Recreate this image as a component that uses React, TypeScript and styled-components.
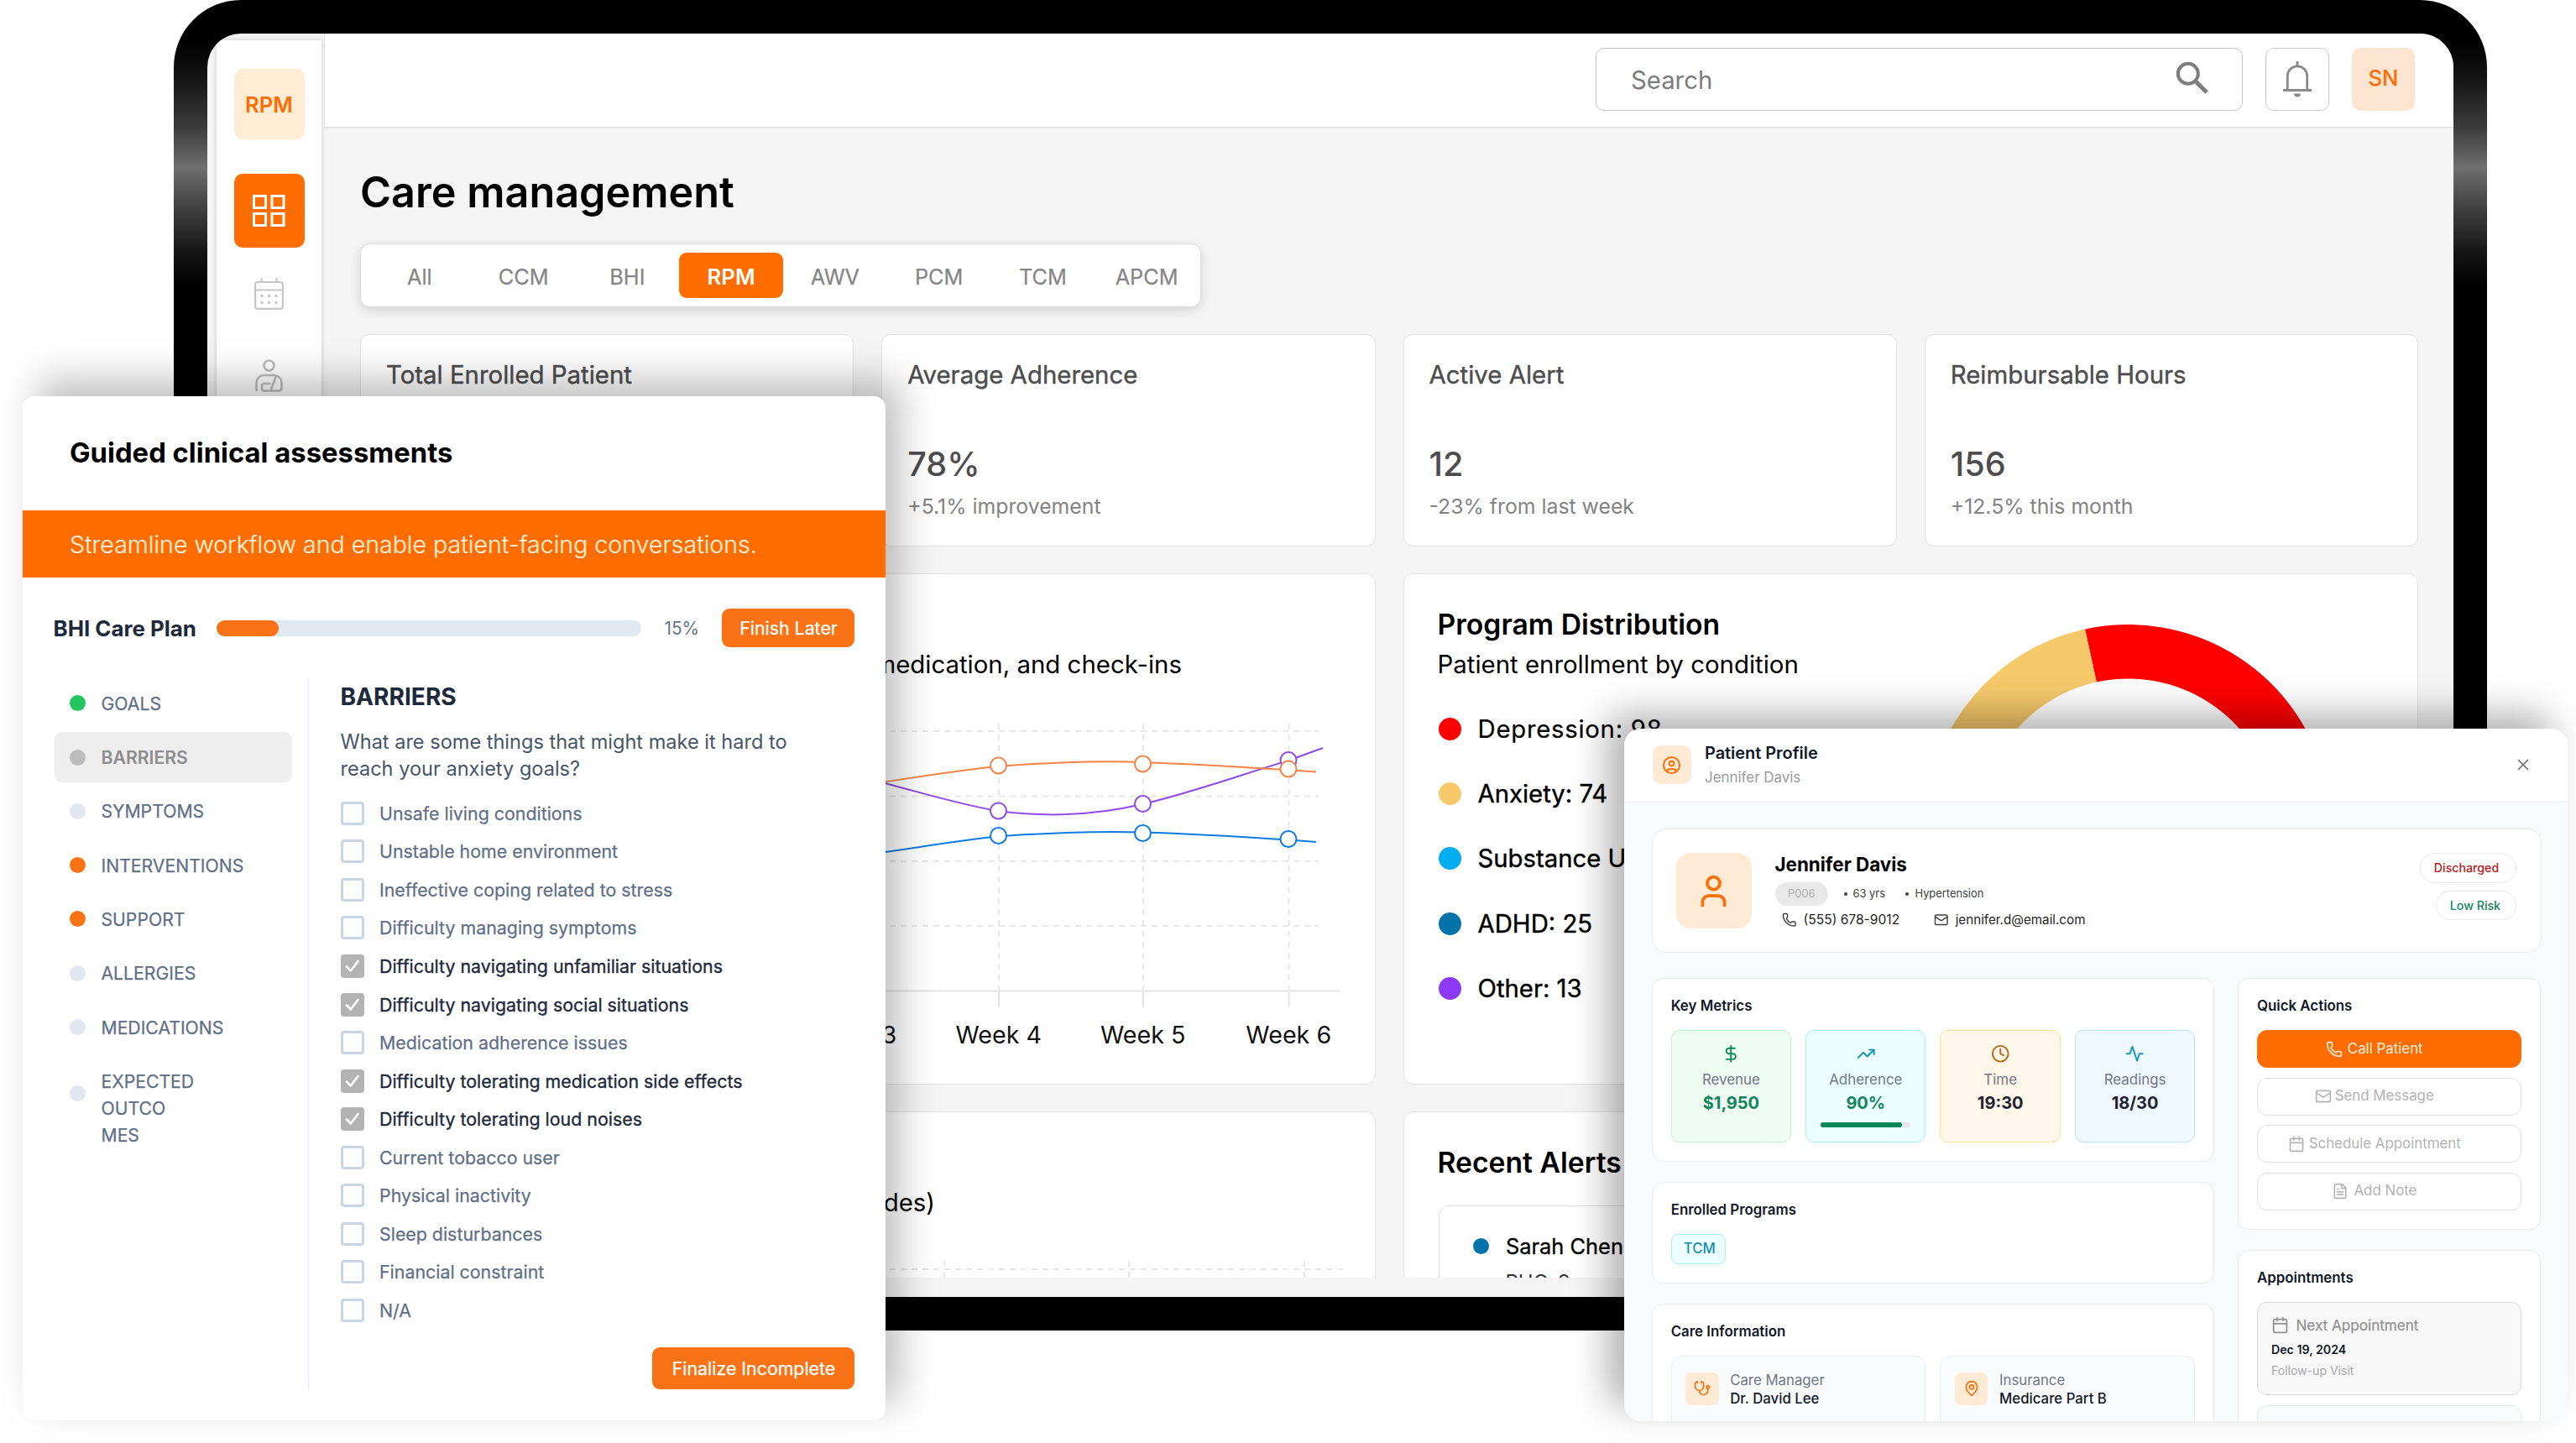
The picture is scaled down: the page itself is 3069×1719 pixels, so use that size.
import * as React from 'react';
import styled, { createGlobalStyle } from 'styled-components';
import {
  Calendar,
  CircleUser,
  Clock,
  DollarSign,
  FileText,
  Mail,
  MapPin,
  Phone,
  Stethoscope,
  TrendingUp,
  User,
  X,
} from 'lucide-react';

const GlobalStyle = createGlobalStyle`
  *, *::before, *::after {
    box-sizing: border-box;
  }

  body {
    margin: 0;
    background: #fff;
    font-family: 'Inter', 'Liberation Sans', sans-serif;
  }

  h1, h2, h3, p, ul {
    margin: 0;
    padding: 0;
    font-weight: 400;
    list-style: none;
  }

  svg {
    display: block;
    flex: none;
  }
`;

/* ---------- data ---------- */

const tabs = ['All', 'CCM', 'BHI', 'RPM', 'AWV', 'PCM', 'TCM', 'APCM'];

const stats = [
  { title: 'Total Enrolled Patient', value: '1,284', note: '+8.2% this month' },
  { title: 'Average Adherence', value: '78%', note: '+5.1% improvement' },
  { title: 'Active Alert', value: '12', note: '-23% from last week' },
  { title: 'Reimbursable Hours', value: '156', note: '+12.5% this month' },
];

const conditions = [
  { label: 'Depression: 98', color: '#ff0000', wide: true },
  { label: 'Anxiety: 74', color: '#f6c96b' },
  { label: 'Substance Use: 42', color: '#00aeef' },
  { label: 'ADHD: 25', color: '#0273a8' },
  { label: 'Other: 13', color: '#8c39f5' },
];

const weeks = [
  { label: 'Week 1', x: 201 },
  { label: 'Week 2', x: 374 },
  { label: 'Week 3', x: 546 },
  { label: 'Week 4', x: 718.5 },
  { label: 'Week 5', x: 890.5 },
  { label: 'Week 6', x: 1064 },
];

const series = [
  {
    color: '#0f7be0',
    d: 'M201 190C330 188 450 184 583 165C640 157 690 148 730 145.5C800 141 850 140.5 890 141.5C960 143.5 1030 148 1097 153',
    points: [
      [718.5, 145.5],
      [890.5, 142.5],
      [1064, 149.5],
    ],
  },
  {
    color: '#8f4be8',
    d: 'M201 40C330 40 450 55 583 83C640 98 680 110 718 116C770 123 830 122 890 108C950 94 1010 72 1064 56L1105 41',
    points: [
      [718.5, 116],
      [890.5, 107.5],
      [1064, 55.5],
    ],
  },
  {
    color: '#f58345',
    d: 'M201 140C330 125 450 100 583 81.5C640 73 690 64.5 730 62C800 57 850 56.5 890 58C960 60.500 1030 65 1097 69.500',
    points: [
      [718.5, 62],
      [890.5, 60],
      [1064, 66],
    ],
  },
];

const sections = [
  { label: 'GOALS', color: '#22c55e' },
  { label: 'BARRIERS', color: '#bcbcbc', active: true },
  { label: 'SYMPTOMS', color: '#e2e8f0' },
  { label: 'INTERVENTIONS', color: '#f97316' },
  { label: 'SUPPORT', color: '#f97316' },
  { label: 'ALLERGIES', color: '#e2e6f0' },
  { label: 'MEDICATIONS', color: '#e2e6f0' },
];

const barriers = [
  { label: 'Unsafe living conditions' },
  { label: 'Unstable home environment' },
  { label: 'Ineffective coping related to stress' },
  { label: 'Difficulty managing symptoms' },
  { label: 'Difficulty navigating unfamiliar situations', checked: true },
  { label: 'Difficulty navigating social situations', checked: true },
  { label: 'Medication adherence issues' },
  { label: 'Difficulty tolerating medication side effects', checked: true },
  { label: 'Difficulty tolerating loud noises', checked: true },
  { label: 'Current tobacco user' },
  { label: 'Physical inactivity' },
  { label: 'Sleep disturbances' },
  { label: 'Financial constraint' },
  { label: 'N/A' },
];

/* ---------- icons ---------- */

const GridIcon = () => (
  <svg width="39" height="39" viewBox="0 0 39 39" fill="none" stroke="#fff" strokeWidth="3">
    <rect x="1.500" y="1.500" width="14" height="14" />
    <rect x="23" y="1.500" width="14" height="14" />
    <rect x="1.500" y="22.500" width="14" height="14" />
    <rect x="23" y="22.500" width="14" height="14" />
  </svg>
);

const ScheduleIcon = () => (
  <svg width="35" height="38" viewBox="0 0 35 38" fill="none" stroke="#c6c6c6" strokeWidth="2.200">
    <rect x="1.100" y="5" width="32.800" height="31.900" rx="3" />
    <path d="M1 14.500h33M8.500 0v5M26.500 0v5" />
    <g fill="#c6c6c6" stroke="none">
      {[21.5, 29.5].map(y => [9, 17.5, 26].map(x => <circle key={`${x}-${y}`} cx={x} cy={y} r="1.800" />))}
    </g>
  </svg>
);

const PatientIcon = () => (
  <svg width="33" height="39" viewBox="0 0 33 39" fill="none" stroke="#bdbdbd" strokeWidth="2.600">
    <circle cx="16.500" cy="7.500" r="6" />
    <path d="M1.500 38V28a9 9 0 0 1 9-9h12a9 9 0 0 1 9 9v6.500a3 3 0 0 1-3 3h-18a2.500 2.500 0 0 1-2.500-2.500v-3.500a2.500 2.500 0 0 1 2.500-2.500h8" />
    <path d="M25 20L18.500 37" />
  </svg>
);

const SearchIcon = () => (
  <svg width="40" height="40" viewBox="0 0 40 40" fill="none" stroke="#7d7d7d">
    <circle cx="14.800" cy="14.800" r="12" strokeWidth="4" />
    <path d="M23.500 23.500L37 37" strokeWidth="5" />
  </svg>
);

const BellIcon = () => (
  <svg width="34" height="43" viewBox="0 0 34 43" fill="none" stroke="#8a8a8a" strokeWidth="2.800">
    <path d="M5.300 34V17.500a11.700 11.700 0 0 1 23.400 0V34" />
    <path d="M0 34.500h34M17 0v6" strokeWidth="3" />
    <path d="M13 38.500h8a4 4 0 0 1-8 0z" fill="#8a8a8a" stroke="none" />
  </svg>
);

const CheckIcon = () => (
  <svg width="18" height="16" viewBox="0 0 18 16" fill="none" stroke="#fff" strokeWidth="2.700">
    <path d="M2 8.500l4.800 5L15.500 2" strokeLinecap="round" strokeLinejoin="round" />
  </svg>
);

const ActivityIcon = () => (
  <svg
    width="22.500"
    height="22.500"
    viewBox="0 0 24 24"
    fill="none"
    stroke="#0e95b7"
    strokeWidth="2"
    strokeLinecap="round"
    strokeLinejoin="round"
  >
    <path d="M22 12h-4l-3 9L9 3l-3 9H2" />
  </svg>
);

/* ---------- device and dashboard ---------- */

const Stage = styled.main`
  position: relative;
  width: 3069px;
  height: 1719px;
  overflow: hidden;
  background: #fff;
`;

const Device = styled.div`
  width: 2756px;
  height: 1585px;
  margin-left: 207px;
  padding: 40px;
  border-radius: 80px;
  background: linear-gradient(
    #000 50px,
    #131313 90px,
    #3a3a3a 150px,
    #6f6f6f 200px,
    #3e3e3e 250px,
    #161616 300px,
    #000 342px
  );
`;

const Screen = styled.div`
  display: flex;
  height: 1505px;
  padding-bottom: 23px;
  border-radius: 40px;
  overflow: hidden;
  background: #f5f5f5;
`;

const Sidebar = styled.nav`
  display: flex;
  flex: none;
  flex-direction: column;
  align-items: center;
  width: 125px;
  height: 1600px;
  margin: 8px 3px 0 11px;
  padding-top: 34px;
  background: #fff;
  box-shadow: 0 0 6px rgba(0, 0, 0, 0.18);
`;

const Brand = styled.div`
  display: flex;
  align-items: center;
  justify-content: center;
  width: 84px;
  height: 84px;
  margin-bottom: 41px;
  border-radius: 11px;
  background: #ffecd4;
  color: #ff6c00;
  font-size: 25.6px;
  font-weight: 600;
`;

const ActiveNav = styled.div`
  display: flex;
  align-items: center;
  justify-content: center;
  width: 84px;
  height: 88px;
  border-radius: 10px;
  background: #ff6c00;
`;

const NavIcon = styled.div<{ $top: number }>`
  margin-top: ${({ $top }) => $top}px;
`;

const Main = styled.div`
  flex: 1;
  height: 1482px;
  overflow: hidden;
`;

const TopBar = styled.header`
  display: flex;
  justify-content: flex-end;
  height: 113px;
  padding: 17px 46px 0 0;
  border-bottom: 2px solid #e4e4e4;
  border-left: 1px solid #e4e4e4;
  background: #fff;
`;

const SearchBox = styled.div`
  display: flex;
  align-items: center;
  justify-content: space-between;
  width: 771px;
  height: 75px;
  padding: 2px 39px 0 41px;
  border: 1.5px solid #c6c6c6;
  border-radius: 10px;
  color: #7c7c7c;
  font-size: 29.3px;

  svg {
    margin-top: -5px;
  }
`;

const BellButton = styled.div`
  display: flex;
  align-items: center;
  justify-content: center;
  width: 76px;
  height: 75px;
  margin: 0 27px;
  border: 1.5px solid #cbcbcb;
  border-radius: 10px;
`;

const Avatar = styled.div`
  width: 75px;
  height: 75px;
  border-radius: 10px;
  background: #fee5d2;
  color: #ff6c00;
  font-size: 25.6px;
  font-weight: 500;
  line-height: 72px;
  text-align: center;
`;

const Content = styled.div`
  padding: 46px 42px 0 43px;
`;

const PageTitle = styled.h1`
  font-size: 50.3px;
  font-weight: 600;
  line-height: 60px;
`;

const TabBar = styled.div`
  display: flex;
  width: 1002px;
  height: 76px;
  margin: 31px 0 31.5px;
  padding: 10px 2px 10px 8px;
  border: 1px solid #dedede;
  border-radius: 12px;
  background: #fff;
  box-shadow: 0 4px 14px rgba(0, 0, 0, 0.14);
`;

const Tab = styled.div<{ $active: boolean }>`
  flex: 1;
  border-radius: 9px;
  background: ${({ $active }) => ($active ? '#ff6c00' : 'transparent')};
  color: ${({ $active }) => ($active ? '#fff' : '#868686')};
  font-size: ${({ $active }) => ($active ? 25.7 : 25.3)}px;
  font-weight: ${({ $active }) => ($active ? 600 : 400)};
  line-height: 58px;
  text-align: center;
  -webkit-text-stroke: ${({ $active }) => ($active ? 0 : 0.25)}px;
`;

const StatRow = styled.div`
  display: grid;
  grid-template-columns: repeat(4, 1fr);
  gap: 33px;
`;

const Card = styled.section`
  border: 1.5px solid #e3e3e3;
  border-radius: 11px;
  background: #fff;
`;

const StatCard = styled(Card)`
  height: 253px;
  padding: 30px 29px 0 30px;
  color: #4d4d4d;
`;

const StatTitle = styled.h2`
  font-size: 29.4px;
  line-height: 36px;
  -webkit-text-stroke: 0.4px;
`;

const StatValue = styled.p`
  margin: 64px 0 11px;
  font-size: 39.6px;
  font-weight: 500;
  line-height: 48px;
`;

const StatNote = styled.p`
  color: #838383;
  font-size: 24.8px;
  line-height: 30px;
`;

const PanelGrid = styled.div`
  display: grid;
  grid-template-columns: 1209.5px 1209.5px;
  grid-template-rows: 609px 600px;
  gap: 32px 33px;
  margin-top: 32px;
`;

const ChartCard = styled(Card)`
  padding: 40px 40px 0;
  overflow: hidden;
`;

const DistributionCard = styled(ChartCard)`
  display: flex;
`;

const ChartTitle = styled.h2`
  font-size: 33.7px;
  font-weight: 600;
  line-height: 40px;
`;

const ChartSubtitle = styled.p<{ $width?: number }>`
  width: ${({ $width }) => ($width ? `${$width}px` : 'auto')};
  margin-top: 10px;
  font-size: 29.4px;
  line-height: 36px;
  text-align: ${({ $width }) => ($width ? 'right' : 'left')};
  white-space: nowrap;
`;

const ChartArea = styled.div`
  margin: 40px 0 0 1px;
`;

const Summary = styled.div`
  flex: none;
  width: 581px;
`;

const Legend = styled.ul`
  margin-top: 20px;
`;

const LegendItem = styled.li<{ $wide?: boolean }>`
  display: flex;
  align-items: center;
  gap: 20px;
  height: 77.4px;
  padding-left: 1px;
  font-size: 29.3px;
  letter-spacing: ${({ $wide }) => ($wide ? 0.75 : 0)}px;
  -webkit-text-stroke: ${({ $wide }) => ($wide ? 0.2 : 0.4)}px;
`;

const Dot = styled.span<{ $size: number; $color: string }>`
  flex: none;
  width: ${({ $size }) => $size}px;
  height: ${({ $size }) => $size}px;
  border-radius: 50%;
  background: ${({ $color }) => $color};
`;

const DonutArea = styled.div`
  margin-top: 20px;
`;

const AlertBox = styled.div`
  height: 300px;
  margin: 31px 0 0 1px;
  padding: 32px 40px;
  border: 1.5px solid #e0e0e0;
  border-radius: 12px;
`;

const AlertName = styled.div`
  display: flex;
  align-items: center;
  gap: 20.5px;
  font-size: 25.4px;
  line-height: 32px;
  -webkit-text-stroke: 0.3px;
`;

const AlertDetail = styled.p`
  margin: 12px 0 0 39px;
  color: #333;
  font-size: 24px;
  line-height: 30px;
`;

/* ---------- guided assessment window ---------- */

const Window = styled.section`
  position: absolute;
  overflow: hidden;
  background: #fff;
`;

const AssessmentWindow = styled(Window)`
  top: 472px;
  left: 27px;
  width: 1028px;
  height: 1220px;
  border-radius: 14px;
  box-shadow: 18px -20px 46px rgba(0, 0, 0, 0.25);
`;

const AssessmentTitle = styled.h2`
  height: 136px;
  padding-left: 56px;
  font-size: 32.8px;
  font-weight: 700;
  line-height: 135px;
`;

const Banner = styled.p`
  height: 80px;
  padding-left: 56px;
  background: #ff6c00;
  color: #fff0dc;
  font-size: 28.55px;
  font-weight: 300;
  line-height: 82px;
  -webkit-text-stroke: 0.2px;
`;

const PlanBar = styled.div`
  display: flex;
  align-items: center;
  height: 46px;
  margin-top: 37px;
  padding: 0 37px 0 36.5px;
`;

const PlanName = styled.h3`
  width: 194px;
  color: #1e293b;
  font-size: 25.9px;
  font-weight: 700;
`;

const ProgressTrack = styled.div`
  width: 506px;
  height: 19px;
  border-radius: 9px;
  overflow: hidden;
  background: #e2e8f0;
`;

const ProgressFill = styled.div`
  height: 100%;
  border-radius: 9px;
  background: #f97316;
`;

const Percent = styled.span`
  flex: 1;
  padding-left: 28px;
  color: #64748b;
  font-size: 20.8px;
`;

const OrangeButton = styled.button<{ $width: number; $height: number }>`
  width: ${({ $width }) => $width}px;
  height: ${({ $height }) => $height}px;
  padding: 0 0 0 1px;
  border: 0;
  border-radius: 9px;
  background: #f97316;
  color: #fff;
  font-family: inherit;
  font-size: 21.35px;
  -webkit-text-stroke: 0.25px;
`;

const AssessmentBody = styled.div`
  display: flex;
  height: 847px;
  margin-top: 37px;
`;

const SectionNav = styled.ul`
  display: flex;
  flex: none;
  flex-direction: column;
  gap: 4.8px;
  width: 339.5px;
  padding: 0 19px 0 37.5px;
`;

const SectionItem = styled.li<{ $active?: boolean }>`
  display: flex;
  align-items: center;
  gap: 19px;
  height: 59.5px;
  padding-left: 18px;
  border-radius: 9px;
  background: ${({ $active }) => ($active ? '#eeeeee' : 'transparent')};
  color: ${({ $active }) => ($active ? '#8d8d8d' : '#5f6f87')};
  font-size: 21.2px;
  font-weight: ${({ $active }) => ($active ? 600 : 400)};
  -webkit-text-stroke: ${({ $active }) => ($active ? 0 : 0.25)}px;
`;

const OutcomeItem = styled(SectionItem)`
  align-items: flex-start;
  height: auto;
  padding-top: 14px;
  line-height: 32.1px;

  span {
    margin-top: 21px;
  }
`;

const Question = styled.div`
  flex: 1;
  padding: 4px 37px 0 38px;
  border-left: 1.5px solid #e2e8f0;
`;

const QuestionTitle = styled.h3`
  color: #1e293b;
  font-size: 28.1px;
  font-weight: 700;
  line-height: 36px;
`;

const QuestionText = styled.p`
  margin: 20px 0 14px;
  color: #475569;
  font-size: 23.55px;
  line-height: 32px;
`;

const Option = styled.li<{ $checked?: boolean }>`
  display: flex;
  align-items: center;
  gap: 18.5px;
  height: 45.56px;
  color: ${({ $checked }) => ($checked ? '#1e293b' : '#5f6f87')};
  font-size: 21.37px;
  -webkit-text-stroke: ${({ $checked }) => ($checked ? 0.35 : 0.25)}px;
`;

const Checkbox = styled.span<{ $checked?: boolean }>`
  display: flex;
  align-items: center;
  justify-content: center;
  width: 28px;
  height: 28px;
  border: ${({ $checked }) => ($checked ? '0' : '3px solid #cbd5e1')};
  border-radius: 4px;
  background: ${({ $checked }) => ($checked ? '#b3b3b3' : '#fff')};
`;

const QuestionFooter = styled.div`
  display: flex;
  justify-content: flex-end;
  margin-top: 21px;
`;

/* ---------- patient profile window ---------- */

const ProfileWindow = styled(Window)`
  top: 868px;
  left: 1935px;
  width: 1124px;
  height: 824.7px;
  border-radius: 20px;
  background: #f9fafc;
  box-shadow: -20px -18px 44px rgba(0, 0, 0, 0.3);
`;

const ProfileHeader = styled.header`
  display: flex;
  align-items: center;
  height: 87.5px;
  padding: 0 42px 0 33.5px;
  border-bottom: 1.5px solid #ebedef;
  background: #fff;
`;

const IconTile = styled.div<{ $size: number; $radius: number }>`
  display: flex;
  flex: none;
  align-items: center;
  justify-content: center;
  width: ${({ $size }) => $size}px;
  height: ${({ $size }) => $size}px;
  border-radius: ${({ $radius }) => $radius}px;
  background: #ffead5;
  color: #f97009;
`;

const HeaderText = styled.div`
  flex: 1;
  padding: 2px 0 0 16.5px;
`;

const HeaderTitle = styled.h2`
  color: #111827;
  font-size: 19.9px;
  font-weight: 600;
  line-height: 29px;
`;

const HeaderName = styled.p`
  color: #9a9a9a;
  font-size: 16.9px;
  line-height: 29px;
`;

const ProfileBody = styled.div`
  padding: 31.5px 31.2px 0 32.5px;
`;

const ProfileCard = styled.section`
  border: 1.5px solid #e8eaee;
  border-radius: 13px;
  background: #fff;
`;

const Identity = styled(ProfileCard)`
  display: flex;
  gap: 28px;
  height: 148px;
  padding: 28px 28.5px 28px 28px;
  border-radius: 17px;
`;

const IdentityText = styled.div`
  flex: 1;
`;

const PatientName = styled.h2`
  margin-bottom: 6.5px;
  font-size: 22.4px;
  font-weight: 700;
  line-height: 28px;
`;

const Facts = styled.div`
  display: flex;
  align-items: center;
  height: 28.7px;
  color: #404040;
  font-size: 12.9px;
`;

const PatientId = styled.span`
  width: 63.5px;
  border-radius: 15px;
  background: #e9e9e9;
  color: #adadad;
  line-height: 28.7px;
  text-align: center;
`;

const Fact = styled.span<{ $left: number }>`
  display: flex;
  align-items: center;
  gap: 7px;
  margin-left: ${({ $left }) => $left}px;
`;

const Contacts = styled.div`
  display: flex;
  gap: 41px;
  margin-top: 7px;
  padding-left: 8.5px;
  color: #262626;
  font-size: 15.6px;
  line-height: 20px;
`;

const Contact = styled.span<{ $size: number }>`
  display: flex;
  align-items: center;
  gap: 8px;
  font-size: ${({ $size }) => $size}px;

  svg {
    color: #404040;
  }
`;

const Badges = styled.div`
  display: flex;
  flex-direction: column;
  align-items: flex-end;
  gap: 9px;
`;

const Badge = styled.span<{ $color: string; $width: number }>`
  width: ${({ $width }) => $width}px;
  height: 35.5px;
  padding-left: 16px;
  border: 1.5px solid #e8e8e8;
  border-radius: 18px;
  color: ${({ $color }) => $color};
  font-size: 14.2px;
  font-weight: 500;
  line-height: 33px;
`;

const Columns = styled.div`
  display: grid;
  grid-template-columns: 670.3px 361.2px;
  gap: 28px;
  margin-top: 30px;
`;

const Column = styled.div`
  display: flex;
  flex-direction: column;
  gap: 23.4px;
`;

const Group = styled(ProfileCard)`
  padding: 21.4px 21.5px 22.3px 22.2px;
`;

const GroupTitle = styled.h3`
  margin-bottom: 18px;
  color: #111827;
  font-size: 16.85px;
  font-weight: 600;
  line-height: 22px;
`;

const MetricRow = styled.div`
  display: grid;
  grid-template-columns: repeat(4, 1fr);
  gap: 17px;
`;

const Metric = styled.div<{ $bg: string; $border: string }>`
  display: flex;
  flex-direction: column;
  align-items: center;
  height: 133.5px;
  padding: 16px 17px 0;
  border: 1.5px solid ${({ $border }) => $border};
  border-radius: 10px;
  background: ${({ $bg }) => $bg};
`;

const MetricLabel = styled.span`
  margin-top: 7.3px;
  color: #6f7785;
  font-size: 16.9px;
  line-height: 24px;
`;

const MetricValue = styled.span<{ $green?: boolean }>`
  margin: 3px 0 9.7px;
  color: ${({ $green }) => ($green ? '#12855b' : '#1f2430')};
  font-size: 20px;
  font-weight: 700;
  line-height: 26px;
`;

const MetricTrack = styled.div`
  align-self: stretch;
  height: 6.5px;
  border-radius: 3px;
  background: #e3e6ea;
`;

const MetricFill = styled.div`
  height: 100%;
  border-radius: 3px;
  background: #0b875b;
`;

const ProgramChip = styled.span`
  display: block;
  width: 65px;
  height: 36px;
  padding-left: 14px;
  border: 1.5px solid #aeeff5;
  border-radius: 8px;
  background: #ecfeff;
  color: #1690aa;
  font-size: 16.8px;
  font-weight: 500;
  line-height: 33px;
`;

const CareRow = styled.div`
  display: grid;
  grid-template-columns: repeat(2, 1fr);
  gap: 17px;
`;

const CareItem = styled.div`
  display: flex;
  gap: 13.5px;
  height: 90px;
  padding: 18.5px 16.5px 0;
  border: 1.5px solid #ebedf0;
  border-radius: 12px;
  background: #f9fbfc;
`;

const CareText = styled.div`
  margin-top: -2px;
  font-size: 16.8px;
  line-height: 22px;
`;

const CareLabel = styled.p`
  color: #6f7785;
`;

const CareValue = styled.p`
  color: #111827;
  font-weight: 500;
`;

const Actions = styled.div`
  display: flex;
  flex-direction: column;
  gap: 11.5px;
`;

const Action = styled.button<{ $primary?: boolean; $gap: number }>`
  display: flex;
  align-items: center;
  justify-content: center;
  gap: ${({ $gap }) => $gap}px;
  height: 45px;
  padding: 0 36px 0 0;
  border: 1.5px solid ${({ $primary }) => ($primary ? '#ff6c00' : '#e0e0e0')};
  border-radius: 12px;
  background: ${({ $primary }) => ($primary ? '#ff6c00' : '#fff')};
  color: ${({ $primary }) => ($primary ? '#ffefdf' : '#b3b3b3')};
  font-family: inherit;
  font-size: 16.85px;

  span {
    padding-bottom: 2px;
  }
`;

const Appointment = styled.div`
  height: 111.5px;
  margin-bottom: 11.5px;
  padding: 15px 16px;
  border: 1.5px solid #d9d9d9;
  border-radius: 12px;
  background: #f8f8f8;
`;

const EmptyAppointment = styled(Appointment)`
  border-color: #e5e7eb;
  background: #f8fafc;
`;

const AppointmentTitle = styled.p`
  display: flex;
  align-items: center;
  gap: 8.5px;
  color: #919191;
  font-size: 17.1px;
  line-height: 24px;
  -webkit-text-stroke: 0.25px;
`;

const AppointmentDate = styled.p`
  margin: 6px 0 3.5px;
  color: #111827;
  font-size: 14.2px;
  font-weight: 600;
  line-height: 22px;
`;

const AppointmentKind = styled.p`
  color: #a9a9a9;
  font-size: 14.05px;
  line-height: 22px;
`;

/* ---------- charts ---------- */

const AdherenceChart: React.FC = () => (
  <svg width="1130" height="400" viewBox="0 0 1130 400" fill="none">
    <g stroke="#e8e8e8" strokeWidth="2" strokeDasharray="7 6">
      {[21, 98.5, 176, 253].map(y => (
        <path key={y} d={`M30 ${y}H1100`} />
      ))}
      {weeks.map(w => (
        <path key={w.label} d={`M${w.x + 0.5} 12V330`} />
      ))}
    </g>
    <g stroke="#e4e4e4" strokeWidth="2">
      <path d="M30 330.500H1125" />
      {weeks.map(w => (
        <path key={w.label} d={`M${w.x + 0.5} 330V350`} />
      ))}
    </g>
    {series.map(s => (
      <g key={s.color} stroke={s.color} strokeWidth="2">
        <path d={s.d} />
        {s.points.map(([x, y]) => (
          <circle key={x} cx={x} cy={y} r="9.500" fill="#fff" />
        ))}
      </g>
    ))}
    {weeks.map(w => (
      <text key={w.label} x={w.x + 0.3} y="393" fill="#111" fontSize="28.700" textAnchor="middle">
        {w.label}
      </text>
    ))}
  </svg>
);

const BillingChart: React.FC = () => (
  <svg width="1140" height="200" viewBox="0 0 1140 200" fill="none" stroke="#e6e6e6" strokeWidth="2">
    <path d="M30 21H1133" strokeDasharray="7 6" />
    <path d="M654 11v180M874 11v180M1083 11v180" strokeDasharray="7 6" />
  </svg>
);

const donut = [
  { color: '#ff0000', from: -12.3, sweep: 140.3 },
  { color: '#8c39f5', from: 128, sweep: 18.5 },
  { color: '#0273a8', from: 146.5, sweep: 35.7 },
  { color: '#00aeef', from: 182.2, sweep: 60 },
  { color: '#f6c96b', from: 242.2, sweep: 105.5 },
];

const DonutChart: React.FC = () => (
  <svg width="483" height="483" viewBox="-241.500 -241.500 483 483" fill="none" strokeWidth="64.500">
    {donut.map(d => (
      <circle
        key={d.color}
        r="209.250"
        stroke={d.color}
        pathLength="360"
        strokeDasharray={`${d.sweep} 360`}
        transform={`rotate(${d.from - 90})`}
      />
    ))}
  </svg>
);

/* ---------- windows ---------- */

const Dashboard: React.FC = () => (
  <Device>
    <Screen>
      <Sidebar>
        <Brand>RPM</Brand>
        <ActiveNav>
          <GridIcon />
        </ActiveNav>
        <NavIcon $top={36}>
          <ScheduleIcon />
        </NavIcon>
        <NavIcon $top={59}>
          <PatientIcon />
        </NavIcon>
      </Sidebar>
      <Main>
        <TopBar>
          <SearchBox>
            Search
            <SearchIcon />
          </SearchBox>
          <BellButton>
            <BellIcon />
          </BellButton>
          <Avatar>SN</Avatar>
        </TopBar>
        <Content>
          <PageTitle>Care management</PageTitle>
          <TabBar>
            {tabs.map(t => (
              <Tab key={t} $active={t === 'RPM'}>
                {t}
              </Tab>
            ))}
          </TabBar>
          <StatRow>
            {stats.map(s => (
              <StatCard key={s.title}>
                <StatTitle>{s.title}</StatTitle>
                <StatValue>{s.value}</StatValue>
                <StatNote>{s.note}</StatNote>
              </StatCard>
            ))}
          </StatRow>
          <PanelGrid>
            <ChartCard>
              <ChartTitle>Patient Adherence</ChartTitle>
              <ChartSubtitle $width={938}>Engagement across vitals, medication, and check-ins</ChartSubtitle>
              <ChartArea>
                <AdherenceChart />
              </ChartArea>
            </ChartCard>
            <DistributionCard>
              <Summary>
                <ChartTitle>Program Distribution</ChartTitle>
                <ChartSubtitle>Patient enrollment by condition</ChartSubtitle>
                <Legend>
                  {conditions.map(c => (
                    <LegendItem key={c.label} $wide={c.wide}>
                      <Dot $size={27} $color={c.color} />
                      {c.label}
                    </LegendItem>
                  ))}
                </Legend>
              </Summary>
              <DonutArea>
                <DonutChart />
              </DonutArea>
            </DistributionCard>
            <ChartCard>
              <ChartTitle>Monthly Billing</ChartTitle>
              <ChartSubtitle $width={644}>Billable time by program (CPT codes)</ChartSubtitle>
              <ChartArea>
                <BillingChart />
              </ChartArea>
            </ChartCard>
            <ChartCard>
              <ChartTitle>Recent Alerts</ChartTitle>
              <AlertBox>
                <AlertName>
                  <Dot $size={19} $color="#0273a8" />
                  Sarah Chen
                </AlertName>
                <AlertDetail>PHQ-9</AlertDetail>
              </AlertBox>
            </ChartCard>
          </PanelGrid>
        </Content>
      </Main>
    </Screen>
  </Device>
);

const Assessment: React.FC = () => (
  <AssessmentWindow>
    <AssessmentTitle>Guided clinical assessments</AssessmentTitle>
    <Banner>Streamline workflow and enable patient-facing conversations.</Banner>
    <PlanBar>
      <PlanName>BHI Care Plan</PlanName>
      <ProgressTrack>
        <ProgressFill style={{ width: '14.7%' }} />
      </ProgressTrack>
      <Percent>15%</Percent>
      <OrangeButton $width={158} $height={46}>
        Finish Later
      </OrangeButton>
    </PlanBar>
    <AssessmentBody>
      <SectionNav>
        {sections.map(s => (
          <SectionItem key={s.label} $active={s.active}>
            <Dot $size={19} $color={s.color} />
            {s.label}
          </SectionItem>
        ))}
        <OutcomeItem>
          <Dot $size={19} $color="#e2e6f0" />
          <p>
            EXPECTED
            <br />
            OUTCO
            <br />
            MES
          </p>
        </OutcomeItem>
      </SectionNav>
      <Question>
        <QuestionTitle>BARRIERS</QuestionTitle>
        <QuestionText>
          What are some things that might make it hard to
          <br />
          reach your anxiety goals?
        </QuestionText>
        <ul>
          {barriers.map(b => (
            <Option key={b.label} $checked={b.checked}>
              <Checkbox $checked={b.checked}>{b.checked && <CheckIcon />}</Checkbox>
              {b.label}
            </Option>
          ))}
        </ul>
        <QuestionFooter>
          <OrangeButton $width={241} $height={50}>
            Finalize Incomplete
          </OrangeButton>
        </QuestionFooter>
      </Question>
    </AssessmentBody>
  </AssessmentWindow>
);

const Profile: React.FC = () => (
  <ProfileWindow>
    <ProfileHeader>
      <IconTile $size={46} $radius={10}>
        <CircleUser size={23} />
      </IconTile>
      <HeaderText>
        <HeaderTitle>Patient Profile</HeaderTitle>
        <HeaderName>Jennifer Davis</HeaderName>
      </HeaderText>
      <X size={22} color="#6f6f6f" strokeWidth={1.9} />
    </ProfileHeader>
    <ProfileBody>
      <Identity>
        <IconTile $size={90} $radius={17}>
          <User size={45} />
        </IconTile>
        <IdentityText>
          <PatientName>Jennifer Davis</PatientName>
          <Facts>
            <PatientId>P006</PatientId>
            <Fact $left={18.5}>
              <Dot $size={4} $color="#404040" />
              63 yrs
            </Fact>
            <Fact $left={24.5}>
              <Dot $size={4} $color="#404040" />
              Hypertension
            </Fact>
          </Facts>
          <Contacts>
            <Contact $size={15.6}>
              <Phone size={17.5} />
              (555) 678-9012
            </Contact>
            <Contact $size={15.2}>
              <Mail size={17.5} />
              jennifer.d@email.com
            </Contact>
          </Contacts>
        </IdentityText>
        <Badges>
          <Badge $color="#b91c1c" $width={115.5}>
            Discharged
          </Badge>
          <Badge $color="#12855b" $width={96.5}>
            Low Risk
          </Badge>
        </Badges>
      </Identity>
      <Columns>
        <Column>
          <Group>
            <GroupTitle>Key Metrics</GroupTitle>
            <MetricRow>
              <Metric $bg="#effcf3" $border="#c0f0d2">
                <DollarSign size={22.5} color="#12855b" />
                <MetricLabel>Revenue</MetricLabel>
                <MetricValue $green>$1,950</MetricValue>
              </Metric>
              <Metric $bg="#ebffff" $border="#a9eef5">
                <TrendingUp size={22.5} color="#0f8fb0" />
                <MetricLabel>Adherence</MetricLabel>
                <MetricValue $green>90%</MetricValue>
                <MetricTrack>
                  <MetricFill style={{ width: '90%' }} />
                </MetricTrack>
              </Metric>
              <Metric $bg="#fff7ea" $border="#fbe392">
                <Clock size={22.5} color="#b3630f" />
                <MetricLabel>Time</MetricLabel>
                <MetricValue>19:30</MetricValue>
              </Metric>
              <Metric $bg="#eff7ff" $border="#bfe1f2">
                <ActivityIcon />
                <MetricLabel>Readings</MetricLabel>
                <MetricValue>18/30</MetricValue>
              </Metric>
            </MetricRow>
          </Group>
          <Group>
            <GroupTitle>Enrolled Programs</GroupTitle>
            <ProgramChip>TCM</ProgramChip>
          </Group>
          <Group>
            <GroupTitle>Care Information</GroupTitle>
            <CareRow>
              <CareItem>
                <IconTile $size={39.5} $radius={8}>
                  <Stethoscope size={20} />
                </IconTile>
                <CareText>
                  <CareLabel>Care Manager</CareLabel>
                  <CareValue>Dr. David Lee</CareValue>
                </CareText>
              </CareItem>
              <CareItem>
                <IconTile $size={39.5} $radius={8}>
                  <MapPin size={20} />
                </IconTile>
                <CareText>
                  <CareLabel>Insurance</CareLabel>
                  <CareValue>Medicare Part B</CareValue>
                </CareText>
              </CareItem>
            </CareRow>
          </Group>
        </Column>
        <Column>
          <Group>
            <GroupTitle>Quick Actions</GroupTitle>
            <Actions>
              <Action $primary $gap={6}>
                <Phone size={20} />
                <span>Call Patient</span>
              </Action>
              <Action $gap={4}>
                <Mail size={20} />
                <span>Send Message</span>
              </Action>
              <Action $gap={5}>
                <Calendar size={20} />
                <span>Schedule Appointment</span>
              </Action>
              <Action $gap={6.5}>
                <FileText size={20} />
                <span>Add Note</span>
              </Action>
            </Actions>
          </Group>
          <Group>
            <GroupTitle>Appointments</GroupTitle>
            <Appointment>
              <AppointmentTitle>
                <Calendar size={21} />
                Next Appointment
              </AppointmentTitle>
              <AppointmentDate>Dec 19, 2024</AppointmentDate>
              <AppointmentKind>Follow-up Visit</AppointmentKind>
            </Appointment>
            <EmptyAppointment />
          </Group>
        </Column>
      </Columns>
    </ProfileBody>
  </ProfileWindow>
);

const App: React.FC = () => (
  <Stage>
    <GlobalStyle />
    <Dashboard />
    <Assessment />
    <Profile />
  </Stage>
);

export default App;
